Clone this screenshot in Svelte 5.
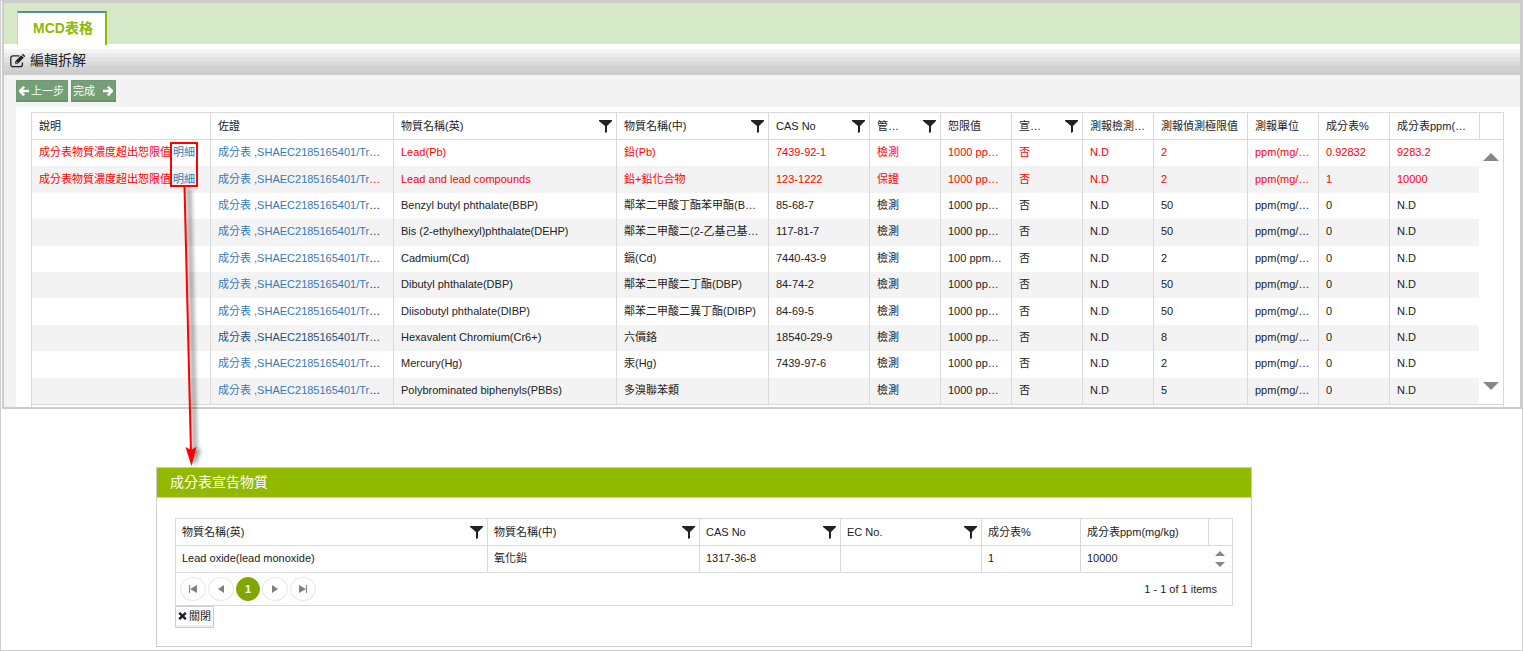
<script lang="ts">
  type Column = { title: string; width: number; filter?: boolean };

  type Substance = {
    note?: string;
    name: string;
    nameZh: string;
    cas: string;
    control: string;
    limit: string;
    declared: string;
    detected: string;
    detectLimit: string;
    unit: string;
    percent: string;
    ppm: string;
    visited?: boolean;
  };

  const columns: Column[] = [
    { title: '說明', width: 178 },
    { title: '佐證', width: 183 },
    { title: '物質名稱(英)', width: 223, filter: true },
    { title: '物質名稱(中)', width: 152, filter: true },
    { title: 'CAS No', width: 101, filter: true },
    { title: '管…', width: 71, filter: true },
    { title: '恕限值', width: 71 },
    { title: '宣…', width: 71, filter: true },
    { title: '測報檢測…', width: 71 },
    { title: '測報偵測極限值', width: 94 },
    { title: '測報單位', width: 71 },
    { title: '成分表%', width: 71 },
    { title: '成分表ppm(…', width: 90 }
  ];

  const detailColumns: Column[] = [
    { title: '物質名稱(英)', width: 311, filter: true },
    { title: '物質名稱(中)', width: 212, filter: true },
    { title: 'CAS No', width: 141, filter: true },
    { title: 'EC No.', width: 141, filter: true },
    { title: '成分表%', width: 99 },
    { title: '成分表ppm(mg/kg)', width: 128 }
  ];

  const base = {
    control: '檢測',
    limit: '1000 pp…',
    declared: '否',
    detected: 'N.D',
    unit: 'ppm(mg/…',
    percent: '0',
    ppm: 'N.D'
  };

  const note = '成分表物質濃度超出恕限值';

  const rows: Substance[] = [
    { ...base, note, name: 'Lead(Pb)', nameZh: '鉛(Pb)', cas: '7439-92-1', detectLimit: '2', percent: '0.92832', ppm: '9283.2' },
    { ...base, note, name: 'Lead and lead compounds', nameZh: '鉛+鉛化合物', cas: '123-1222', control: '保證', detectLimit: '2', percent: '1', ppm: '10000' },
    { ...base, name: 'Benzyl butyl phthalate(BBP)', nameZh: '鄰苯二甲酸丁酯苯甲酯(B…', cas: '85-68-7', detectLimit: '50' },
    { ...base, name: 'Bis (2-ethylhexyl)phthalate(DEHP)', nameZh: '鄰苯二甲酸二(2-乙基己基…', cas: '117-81-7', detectLimit: '50' },
    { ...base, name: 'Cadmium(Cd)', nameZh: '鎘(Cd)', cas: '7440-43-9', limit: '100 ppm…', detectLimit: '2' },
    { ...base, name: 'Dibutyl phthalate(DBP)', nameZh: '鄰苯二甲酸二丁酯(DBP)', cas: '84-74-2', detectLimit: '50' },
    { ...base, name: 'Diisobutyl phthalate(DIBP)', nameZh: '鄰苯二甲酸二異丁酯(DIBP)', cas: '84-69-5', detectLimit: '50' },
    { ...base, name: 'Hexavalent Chromium(Cr6+)', nameZh: '六價鉻', cas: '18540-29-9', detectLimit: '8', visited: true },
    { ...base, name: 'Mercury(Hg)', nameZh: '汞(Hg)', cas: '7439-97-6', detectLimit: '2' },
    { ...base, name: 'Polybrominated biphenyls(PBBs)', nameZh: '多溴聯苯類', cas: '', detectLimit: '5' }
  ];
</script>

{#snippet head(cols: Column[])}
  <colgroup>
    {#each cols as col}
      <col style="width: {col.width}px" />
    {/each}
    <col style="width: 24px" />
  </colgroup>
  <thead>
    <tr>
      {#each cols as col}
        <th scope="col">
          <div class="head">
            <span>{col.title}</span>
            {#if col.filter}
              <button class="filter" aria-label="篩選">
                <svg width="13" height="13" viewBox="0 0 13 13">
                  <path d="M0 0h13v1L8 6v6l-2 1V6L0 1z" fill="#222" />
                </svg>
              </button>
            {/if}
          </div>
        </th>
      {/each}
      <th></th>
    </tr>
  </thead>
{/snippet}

<div class="page">
  <main class="panel">
    <nav class="tabs">
      <a class="tab" href="#mcd">MCD表格</a>
    </nav>

    <h1 class="bar">
      <svg width="16" height="14" viewBox="0 0 16 14" fill="none">
        <path d="M12.4 8.6v1.9a2.2 2.2 0 0 1-2.2 2.2H3A2.2 2.2 0 0 1 .8 10.5V4A2.2 2.2 0 0 1 3 1.8h6.3" stroke="#222" stroke-width="1.3" />
        <path d="M5.2 9.800V7.200L11.200 1.200l2.600 2.600-6 6zM11.800.6l.5-.4q.6-.4 1.200.1l1.300 1.300q.5.6 0 1.200l-.5.5z" fill="#222" />
        <path d="M6.1 7.800l1.200 1.200" stroke="#ddd" />
      </svg>
      <span>編輯拆解</span>
    </h1>

    <div class="tools">
      <button class="step">
        <svg width="10" height="10" viewBox="0 0 10 10"><path d="M5.200.6L1 5l4.200 4.400M1.400 5H10" fill="none" stroke="#fff" stroke-width="2.400" /></svg>
        上一步
      </button>
      <button class="step next">
        完成
        <svg width="10" height="10" viewBox="0 0 10 10"><path d="M4.800.6L9 5 4.800 9.400M8.600 5H0" fill="none" stroke="#fff" stroke-width="2.400" /></svg>
      </button>
    </div>

    <div class="content">
      <div class="grid">
        <table class="substances">
          {@render head(columns)}
          <tbody>
            {#each rows as row, i}
              <tr class:over={row.note}>
                <td>{#if row.note}{row.note}<a class="more" href="#detail">明細</a>{/if}</td>
                <td><a href="#proof" class:visited={row.visited}>成分表 ,SHAEC2185165401/Tr</a>…</td>
                <td>{row.name}</td>
                <td>{row.nameZh}</td>
                <td>{row.cas}</td>
                <td>{row.control}</td>
                <td>{row.limit}</td>
                <td>{row.declared}</td>
                <td>{row.detected}</td>
                <td>{row.detectLimit}</td>
                <td>{row.unit}</td>
                <td>{row.percent}</td>
                <td>{row.ppm}</td>
                {#if i === 0}
                  <td class="scroll" rowspan={rows.length}>
                    <div class="scroller">
                      <button aria-label="向上捲動"><svg width="16" height="8" viewBox="0 0 16 8"><path d="M8 0l8 8H0z" fill="#878787" /></svg></button>
                      <button aria-label="向下捲動"><svg width="16" height="8" viewBox="0 0 16 8"><path d="M8 8l8-8H0z" fill="#878787" /></svg></button>
                    </div>
                  </td>
                {/if}
              </tr>
            {/each}
          </tbody>
        </table>
      </div>
    </div>
  </main>

  <section class="dialog" id="detail">
    <h2>成分表宣告物質</h2>
    <div class="dialog-body">
      <div class="grid detail">
        <table>
          {@render head(detailColumns)}
          <tbody>
            <tr>
              <td>Lead oxide(lead monoxide)</td>
              <td>氧化鉛</td>
              <td>1317-36-8</td>
              <td></td>
              <td>1</td>
              <td>10000</td>
              <td class="scroll">
                <div class="scroller small">
                  <button aria-label="向上捲動"><svg width="10" height="5" viewBox="0 0 10 5"><path d="M5 0l5 5H0z" fill="#878787" /></svg></button>
                  <button aria-label="向下捲動"><svg width="10" height="5" viewBox="0 0 10 5"><path d="M5 5l5-5H0z" fill="#878787" /></svg></button>
                </div>
              </td>
            </tr>
          </tbody>
        </table>
        <div class="pager">
          <button aria-label="第一頁"><svg width="8" height="8" viewBox="0 0 8 8"><path d="M0 0h1v8H0zM8 0v8L1 4z" fill="#808080" /></svg></button>
          <button aria-label="上一頁"><svg width="6" height="8" viewBox="0 0 6 8"><path d="M6 0v8L0 4z" fill="#808080" /></svg></button>
          <button class="current">1</button>
          <button aria-label="下一頁"><svg width="6" height="8" viewBox="0 0 6 8"><path d="M0 0v8l6-4z" fill="#808080" /></svg></button>
          <button aria-label="最後一頁"><svg width="8" height="8" viewBox="0 0 8 8"><path d="M7 0h1v8H7zM0 0v8l7-4z" fill="#808080" /></svg></button>
          <span class="info">1 - 1 of 1 items</span>
        </div>
      </div>
      <button class="close">
        <svg width="9" height="8" viewBox="0 0 9 8"><path d="M1.200.8l6.600 6.400M7.800.8L1.200 7.200" stroke="#222" stroke-width="2.400" /></svg>
        關閉
      </button>
    </div>
  </section>

  <!-- callout from the detail links to the dialog -->
  <svg class="callout" width="60" height="340" viewBox="0 0 60 340">
    <defs>
      <filter id="soft" x="-100%" y="-10%" width="300%" height="120%">
        <feGaussianBlur stdDeviation="2" />
      </filter>
    </defs>
    <g filter="url(#soft)" opacity="0.4">
      <path d="M29 48L35 315" stroke="#000" stroke-width="4" />
      <path d="M29 309l12 0-6 17z" fill="#000" />
    </g>
    <rect x="11" y="3" width="26" height="43" fill="none" stroke="#f00" stroke-width="2" />
    <path d="M24.500 46L31 312" stroke="#f00" stroke-width="2" />
    <path d="M25.500 307l5.500 3 5.500-3-5 19z" fill="#f00" />
  </svg>
</div>

<style>
  :global(body) {
    background: #fff;
  }

  .page {
    position: relative;
    box-sizing: border-box;
    min-height: 100vh;
    padding: 0 0 3px 1px;
    border: 1px solid #ccc;
    color: #222;
    font: 11px/16px "Liberation Sans", "Noto Sans CJK TC", sans-serif;
  }

  button {
    margin: 0;
    padding: 0;
    border: 0;
    background: none;
    color: inherit;
    font: inherit;
  }

  svg {
    display: block;
    flex: none;
  }

  a {
    color: #337ab7;
    text-decoration: none;
  }

  a.visited {
    color: #23527c;
  }

  a.more {
    margin-left: 2px;
  }

  .panel {
    border: 2px solid #ccc;
    background: #f3f3f3;
  }

  /* Tabs and title bar */
  .tabs {
    display: flex;
    height: 33px;
    padding: 8px 13px 0;
    background: #d5e8c8;
    border-bottom: 5px solid #fff;
  }

  .tab {
    box-sizing: border-box;
    height: 34px;
    padding: 0 12px 0 15px;
    border: solid #ccc;
    border-width: 2px 2px 0 1px;
    border-top-color: #558ba0;
    border-right-color: #91b900;
    background: #fff;
    color: #91b900;
    font-size: 14px;
    font-weight: bold;
    line-height: 30px;
  }

  .bar {
    display: flex;
    align-items: center;
    gap: 4px;
    height: 24px;
    margin: 0;
    padding: 0 6px 2px;
    background: linear-gradient(#f3f3f3 4px, #ebebeb 4px 8px, #e2e2e2 8px 13px, #dadada 13px 17px, #d2d2d2 17px 22px, #ccc 22px);
    font-size: 14px;
    font-weight: normal;
    line-height: 22px;
  }

  .bar span {
    padding-bottom: 2px;
  }

  .tools {
    display: flex;
    gap: 3px;
    padding: 5px 12px;
  }

  .step {
    display: flex;
    align-items: center;
    gap: 2px;
    height: 22px;
    padding: 0 4px 1px 3px;
    border-radius: 1px;
    background: #73a077;
    box-shadow: inset 0 -2px #68916b, inset 0 0 0 1px #6d9871;
    color: #fff;
  }

  .step.next {
    gap: 8px;
    padding: 0 3px 1px 2px;
  }

  .content {
    margin-left: 12px;
    padding: 5px 16px 0 15px;
    background: #fff;
  }

  /* Grids */
  .grid {
    border: 1px solid #d9d9d9;
    border-bottom: 0;
    background: #fff;
    padding-bottom: 2px;
  }

  .grid.detail {
    padding-bottom: 0;
    border-bottom: 1px solid #d9d9d9;
  }

  table {
    width: 100%;
    table-layout: fixed;
    border-collapse: separate;
    border-spacing: 0;
    border-bottom: 1px solid #d9d9d9;
  }

  th,
  td {
    box-sizing: border-box;
    height: 26px;
    padding: 0 0 2px 7px;
    border-left: 1px solid #d9d9d9;
    overflow: hidden;
    text-align: left;
    font-weight: normal;
    white-space: nowrap;
  }

  th:first-child,
  td:first-child {
    border-left: 0;
  }

  th {
    height: 27px;
    padding-bottom: 0;
    border-bottom: 1px solid #d9d9d9;
  }

  .detail th,
  .detail td {
    padding-left: 6px;
  }

  .head {
    display: flex;
    align-items: center;
    justify-content: space-between;
    padding-right: 4px;
  }

  .substances tbody tr:nth-child(even) {
    background: #f3f3f3;
  }

  .over {
    color: #f00;
  }

  td.scroll,
  .detail td.scroll {
    padding: 0;
    border-left: 0;
    background: #fff;
  }

  .scroller {
    box-sizing: border-box;
    display: flex;
    flex-direction: column;
    align-items: center;
    justify-content: space-between;
    height: 264px;
    padding: 13px 0 14px;
  }

  .scroller.small {
    height: 26px;
    padding: 5px 0;
  }

  /* Detail dialog */
  .dialog {
    margin: 58px 270px 0 154px;
    border: 1px solid #ccc;
    background: #fff;
  }

  h2 {
    margin: 0;
    padding: 0 13px;
    border-bottom: 1px solid #ccc;
    background: #91b900;
    color: #fff;
    font-size: 14px;
    font-weight: normal;
    line-height: 29px;
  }

  .dialog-body {
    padding: 20px 18px 18px;
  }

  .pager {
    display: flex;
    align-items: center;
    gap: 2px;
    height: 32px;
    padding: 0 15px 0 4px;
  }

  .pager button {
    display: flex;
    align-items: center;
    justify-content: center;
    box-sizing: border-box;
    width: 26px;
    height: 24px;
    border: 1px solid #e6e6e6;
    border-radius: 50%;
  }

  .pager .current {
    width: 24px;
    border-color: #7ea700;
    background: #7ea700;
    color: #fff;
    font-weight: bold;
  }

  .info {
    margin-left: auto;
  }

  .close {
    display: flex;
    align-items: center;
    gap: 2px;
    height: 22px;
    padding: 0 2px 2px;
    border: 1px solid #ccc;
    border-radius: 1px;
    box-shadow: inset 0 -2px #eee;
  }

  .callout {
    position: absolute;
    left: 159px;
    top: 139px;
    pointer-events: none;
  }
</style>
